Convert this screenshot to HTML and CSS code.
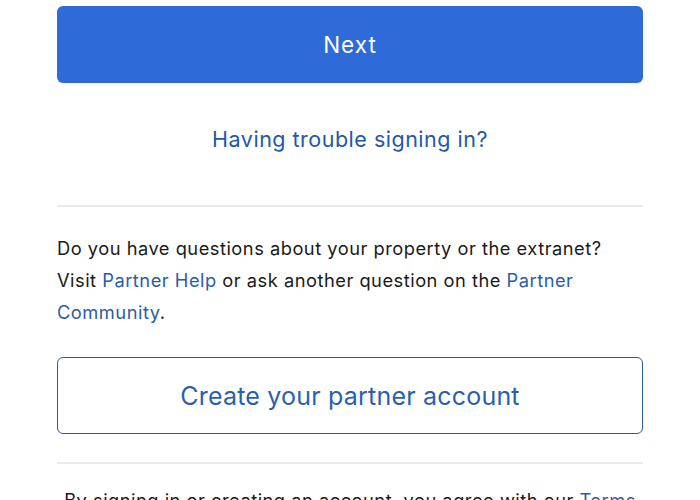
FILE: index.html
```html
<!DOCTYPE html>
<html>
<head>
<meta charset="utf-8">
<link rel="stylesheet" href="styles.css">
</head>
<body>
<main class="page">
  <button class="btn-primary">Next</button>
  <div class="trouble"><a href="#">Having trouble signing in?</a></div>
  <hr class="divider">
  <p class="help">Do you have questions about your property or the extranet?<br>Visit <a href="#">Partner Help</a> or ask another question on the <a href="#">Partner Community</a>.</p>
  <button class="btn-outline">Create your partner account</button>
  <hr class="divider divider-2">
  <p class="legal">By signing in or creating an account, you agree with our <a href="#">Terms &amp; Conditions</a> and <a href="#">Privacy Statement</a></p>
</main>
</body>
</html>
```
FILE: styles.css
```css
html, body {
  margin: 0;
  padding: 0;
  background: #ffffff;
  overflow: hidden;
}
.page {
  padding: 6px 57px 0;
  font-family: "Inter", "Liberation Sans", Arial, sans-serif;
  color: #1a1a1a;
  display: flex;
  flex-direction: column;
}
a {
  color: #2c5da6;
  text-decoration: none;
}
.btn-primary {
  height: 77px;
  width: 100%;
  border: none;
  border-radius: 6px;
  background: #2e6bd9;
  color: #ffffff;
  font-family: inherit;
  font-size: 22.5px;
  letter-spacing: 1px;
  padding: 0;
}
.trouble {
  height: 112px;
  padding-bottom: 10px;
  display: flex;
  align-items: center;
  justify-content: center;
  font-size: 21.5px;
  letter-spacing: 0.5px;
}
.trouble a {
  color: #2159a8;
}
.divider {
  margin: 0;
  border: none;
  border-top: 2px solid #ebebeb;
}
.help {
  margin: 25px 0 0;
  font-size: 18.3px;
  line-height: 32px;
  letter-spacing: 0.5px;
}
.btn-outline {
  margin-top: 29px;
  height: 77px;
  width: 100%;
  background: #ffffff;
  border: 1.5px solid #2d5a9c;
  border-radius: 6px;
  color: #2a5fae;
  font-family: inherit;
  font-size: 25px;
  letter-spacing: 0.2px;
  padding: 0;
}
.divider-2 {
  margin-top: 28px;
}
.legal {
  margin: 20px 0 0;
  font-size: 18.3px;
  line-height: 32px;
  letter-spacing: 0.5px;
  text-align: center;
}
```
